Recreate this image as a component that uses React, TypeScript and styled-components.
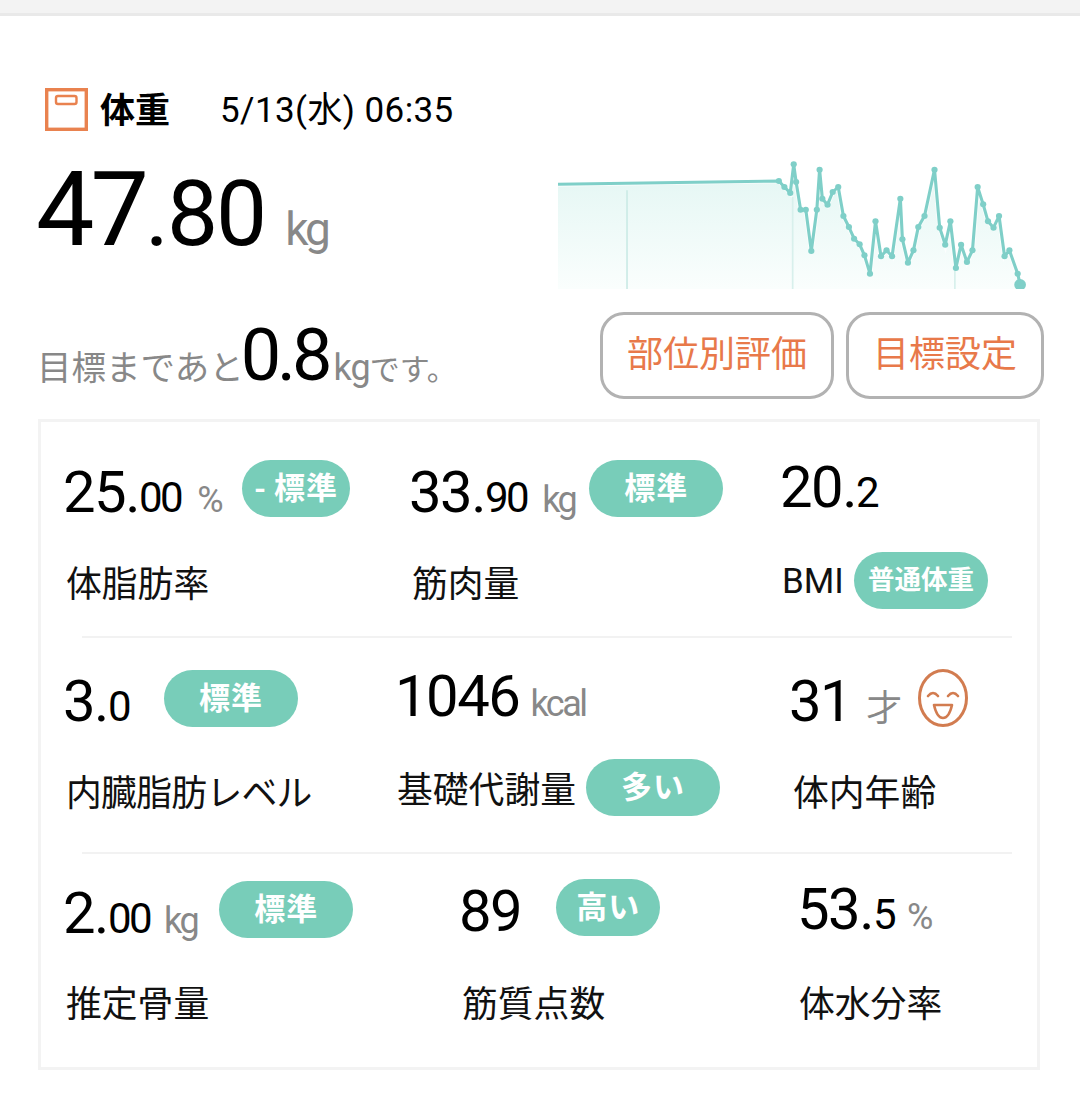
import React from 'react'
import styled, { createGlobalStyle } from 'styled-components'

const GlobalStyle = createGlobalStyle`
  html, body {
    margin: 0;
    padding: 0;
    background: #fff;
  }
  body {
    font-family: Roboto, "Noto Sans CJK JP", sans-serif;
  }
`

const Page = styled.div`
  width: 1080px;
  height: 1108px;
  overflow: hidden;
  background: #fff;
  color: #000;
`

const TopBar = styled.div`
  height: 13px;
  background: #f3f3f3;
  border-bottom: 3px solid #e9e9e9;
`

const Summary = styled.div`
  display: grid;
  grid-template-columns: 520px 1fr;
  height: 403px;
  box-sizing: border-box;
  padding-left: 38px;
`

const SummaryLeft = styled.div`
  display: flex;
  flex-direction: column;
`

const TitleRow = styled.div`
  display: flex;
  align-items: center;
  height: 44px;
  margin: 71px 0 0 7px;
`

const Title = styled.span`
  margin-left: 12px;
  padding-bottom: 4px;
  font-size: 35px;
  font-weight: 700;
  font-family: "Noto Sans CJK JP", sans-serif;
  line-height: 1;
`

const DateText = styled.span`
  margin-left: 50px;
  padding-top: 2px;
  font-size: 35px;
  letter-spacing: 0.4px;
  line-height: 1;
`

const Weight = styled.div`
  display: flex;
  align-items: baseline;
  height: 100px;
  margin: 29px 0 0 -2px;
  line-height: 100px;
`

const WeightInt = styled.span`
  font-size: 104px;
  letter-spacing: -4px;
`

const WeightFrac = styled.span`
  font-size: 91px;
  letter-spacing: -2px;
`

const WeightUnit = styled.span`
  margin-left: 20px;
  font-size: 46px;
  color: #888;
  letter-spacing: -3px;
`

const Goal = styled.div`
  display: flex;
  align-items: baseline;
  margin: 56px 0 0 -1px;
  height: 80px;
  line-height: 80px;
  font-size: 34.5px;
  color: #888;
  font-family: "Noto Sans CJK JP", Roboto, sans-serif;
`

const GoalValue = styled.span`
  margin-left: -3px;
  font-family: Roboto, sans-serif;
  font-size: 72px;
  color: #000;
  letter-spacing: -4px;
`

const GoalUnit = styled.span`
  margin-left: 5px;
  font-family: Roboto, sans-serif;
  font-size: 36px;
  letter-spacing: -1px;
`

const GoalTail = styled.span`
  font-size: 30px;
`

const SummaryRight = styled.div`
  display: flex;
  flex-direction: column;
`

const Chart = styled.svg`
  display: block;
  width: 469px;
  height: 132px;
  margin: 141px 0 0 0;
`

const Buttons = styled.div`
  display: flex;
  gap: 12px;
  margin: 23px 0 0 42px;
`

const OutlineButton = styled.button<{ $width: number }>`
  width: ${(p) => p.$width}px;
  height: 87px;
  box-sizing: border-box;
  padding: 0 0 10px;
  background: #fff;
  border: 3px solid #b2b2b2;
  border-radius: 24px;
  color: #e8794a;
  font-family: "Noto Sans CJK JP", sans-serif;
  font-size: 36px;
  line-height: 1;
`

const Panel = styled.div`
  width: 1002px;
  height: 651px;
  box-sizing: border-box;
  margin-left: 38px;
  border: 3px solid #f3f3f3;
`

const MetricRow = styled.div<{ $divider?: boolean }>`
  position: relative;
  display: grid;
  grid-template-columns: 340px 360px 1fr;
  height: 216px;
  ${(p) =>
    p.$divider
      ? `
    &::after {
      content: '';
      position: absolute;
      left: 41px;
      right: 25px;
      bottom: 0;
      height: 2px;
      background: #f2f2f2;
    }
  `
      : ''}
`

const Cell = styled.div`
  display: flex;
  flex-direction: column;
`

const ValueLine = styled.div<{ $left: number; $top: number }>`
  display: flex;
  align-items: flex-start;
  height: 115px;
  box-sizing: border-box;
  padding: ${(p) => p.$top}px 0 0 ${(p) => p.$left}px;
`

const Value = styled.div`
  display: flex;
  align-items: baseline;
  height: 64px;
  line-height: 64px;
  white-space: nowrap;
`

const ValueInt = styled.span`
  font-size: 58px;
  letter-spacing: -1.5px;
`

const ValueFrac = styled.span`
  font-size: 42px;
  letter-spacing: -2.5px;
`

const Unit = styled.span<{ $gap: number }>`
  margin-left: ${(p) => p.$gap}px;
  font-size: 36px;
  color: #888;
  letter-spacing: -2.5px;
  font-family: Roboto, "Noto Sans CJK JP", sans-serif;
`

const Pill = styled.span<{ $width: number; $left: number; $shift?: number; $small?: boolean }>`
  display: flex;
  align-items: flex-start;
  justify-content: center;
  flex: none;
  width: ${(p) => p.$width}px;
  height: 57px;
  margin-left: ${(p) => p.$left}px;
  margin-top: ${(p) => p.$shift ?? 0}px;
  border-radius: 29px;
  background: #78cdb9;
  color: #fff;
  font-family: "Noto Sans CJK JP", sans-serif;
  font-size: ${(p) => (p.$small ? 26.5 : 31)}px;
  font-weight: 700;
  line-height: 51px;
  letter-spacing: ${(p) => (p.$small ? 0 : 1)}px;
  white-space: nowrap;
`

const LabelLine = styled.div<{ $left: number; $top: number }>`
  display: flex;
  align-items: center;
  height: 60px;
  margin-top: ${(p) => p.$top}px;
  padding-left: ${(p) => p.$left}px;
`

const Label = styled.span<{ $latin?: boolean; $tight?: boolean }>`
  font-family: ${(p) => (p.$latin ? 'Roboto, ' : '')}"Noto Sans CJK JP", sans-serif;
  font-size: ${(p) => (p.$latin ? 35 : 35.8)}px;
  line-height: 60px;
  color: #111;
  white-space: nowrap;
  ${(p) => (p.$latin ? 'padding-top: 4px;' : '')}
  ${(p) => (p.$tight ? 'letter-spacing: -0.7px;' : '')}
`

const FaceIcon = styled.svg`
  flex: none;
  width: 50px;
  height: 58px;
  margin: 0 0 0 18px;
`

const ScaleSvg = styled.svg`
  flex: none;
  width: 43px;
  height: 43px;
`

const ScaleIcon = () => (
  <ScaleSvg viewBox="0 0 43 43">
    <rect x="1.7" y="1.7" width="39.6" height="39.6" fill="#fff" stroke="#e9824f" strokeWidth="3.4" />
    <rect x="11" y="8" width="20.5" height="8" rx="2" fill="none" stroke="#e9824f" strokeWidth="2.4" />
  </ScaleSvg>
)

const Face = () => (
  <FaceIcon viewBox="0 0 50 58">
    <ellipse cx="25" cy="29" rx="23.5" ry="27.5" fill="none" stroke="#d27c50" strokeWidth="3" />
    <path d="M10 27 q5 -6 10 0 M30 27 q5 -6 10 0" fill="none" stroke="#d27c50" strokeWidth="2.6" strokeLinecap="round" />
    <path d="M16 36 H34 Q31 49 25 49 Q19 49 16 36 Z" fill="none" stroke="#d27c50" strokeWidth="2.6" strokeLinejoin="round" />
  </FaceIcon>
)

// traced from the curve, in crop units
const points: [number, number][] = [
  [52, 132], [692, 122], [708, 140], [725, 158], [735, 72], [742, 125], [755, 208], [770, 208],
  [786, 332], [802, 208], [810, 88], [818, 175], [833, 193], [848, 155], [864, 140], [879, 227],
  [895, 260], [910, 295], [926, 312], [940, 345], [956, 400], [972, 243], [988, 348], [1004, 330],
  [1020, 348], [1044, 175], [1050, 297], [1066, 367], [1082, 330], [1096, 260], [1114, 227],
  [1143, 88], [1158, 262], [1174, 313], [1189, 243], [1205, 383], [1220, 313], [1237, 365],
  [1253, 330], [1268, 140], [1284, 192], [1298, 243], [1314, 262], [1330, 227], [1346, 348],
  [1360, 330], [1384, 400], [1391, 433],
]

const linePath = points.map(([x, y]) => `${x},${y}`).join(' ')

const WeightChart = () => (
  <Chart viewBox="52 50 1359 396" preserveAspectRatio="none">
    <defs>
      <linearGradient id="area" x1="0" y1="0" x2="0" y2="1">
        <stop offset="0" stopColor="#e3f6f3" />
        <stop offset="1" stopColor="#fafefd" />
      </linearGradient>
    </defs>
    <polygon points={`${linePath} 1391,446 52,446`} fill="url(#area)" />
    <polyline points={linePath} fill="none" stroke="#fff" strokeWidth="14" opacity="0.7" />
    <path d="M252 150 V446" stroke="#cdebe6" strokeWidth="5" />
    <path d="M732 170 V446" stroke="#d8f0ec" strokeWidth="5" />
    <path d="M1202 390 V446" stroke="#d8f0ec" strokeWidth="5" />
    <polyline points={linePath} fill="none" stroke="#7fcfc8" strokeWidth="9" strokeLinejoin="round" />
    {points.slice(1, -1).map(([x, y]) => (
      <circle key={`${x}-${y}`} cx={x} cy={y} r="9" fill="#7fcfc8" />
    ))}
    <circle cx="1391" cy="433" r="17" fill="#7fcfc8" />
  </Chart>
)

interface IMetric {
  int: string
  frac?: string
  unit?: string
  unitGap?: number
  left: number
  top: number
  pill?: string
  pillWidth?: number
  pillLeft?: number
  pillShift?: number
  face?: boolean
  label: string
  labelLeft: number
  labelTop: number
  labelLatin?: boolean
  labelTight?: boolean
  labelPill?: string
  labelPillWidth?: number
  labelPillLeft?: number
  labelPillSmall?: boolean
}

const rows: IMetric[][] = [
  [
    { int: '25.', frac: '00', unit: '%', unitGap: 16, left: 22, top: 38, pill: '-\u2009標準', pillWidth: 108, pillLeft: 21, pillShift: 0, label: '体脂肪率', labelLeft: 25, labelTop: 14 },
    { int: '33.', frac: '90', unit: 'kg', unitGap: 15, left: 28, top: 38, pill: '標準', pillWidth: 134, pillLeft: 14, pillShift: 0, label: '筋肉量', labelLeft: 31, labelTop: 14 },
    { int: '20.', frac: '2', left: 39, top: 33, label: 'BMI', labelLeft: 41, labelTop: 13, labelLatin: true, labelPill: '普通体重', labelPillWidth: 134, labelPillLeft: 10, labelPillSmall: true },
  ],
  [
    { int: '3.', frac: '0', left: 22, top: 31, pill: '標準', pillWidth: 134, pillLeft: 35, pillShift: 1, label: '内臓脂肪レベル', labelLeft: 25, labelTop: 7, labelTight: true },
    { int: '1046', unit: 'kcal', unitGap: 11, left: 14, top: 26, label: '基礎代謝量', labelLeft: 16, labelTop: 4, labelPill: '多い', labelPillWidth: 134, labelPillLeft: 10 },
    { int: '31', unit: '才', unitGap: 15, left: 48, top: 31, face: true, label: '体内年齢', labelLeft: 52, labelTop: 7 },
  ],
  [
    { int: '2.', frac: '00', unit: 'kg', unitGap: 14, left: 22, top: 27, pill: '標準', pillWidth: 134, pillLeft: 22, pillShift: 0, label: '推定骨量', labelLeft: 25, labelTop: 2 },
    { int: '89', left: 78, top: 25, pill: '高い', pillWidth: 104, pillLeft: 35, pillShift: 0, label: '筋質点数', labelLeft: 81, labelTop: 2 },
    { int: '53.', frac: '5', unit: '%', unitGap: 13, left: 56, top: 23, label: '体水分率', labelLeft: 58, labelTop: 2 },
  ],
]

const Metric = ({ m }: { m: IMetric }): JSX.Element => (
  <Cell>
    <ValueLine $left={m.left} $top={m.top}>
      <Value>
        <ValueInt>{m.int}</ValueInt>
        {m.frac && <ValueFrac>{m.frac}</ValueFrac>}
        {m.unit && <Unit $gap={m.unitGap ?? 0}>{m.unit}</Unit>}
      </Value>
      {m.pill && (
        <Pill $width={m.pillWidth ?? 134} $left={m.pillLeft ?? 0} $shift={m.pillShift}>
          {m.pill}
        </Pill>
      )}
      {m.face && <Face />}
    </ValueLine>
    <LabelLine $left={m.labelLeft} $top={m.labelTop}>
      <Label $latin={m.labelLatin} $tight={m.labelTight}>{m.label}</Label>
      {m.labelPill && (
        <Pill $width={m.labelPillWidth ?? 134} $left={m.labelPillLeft ?? 0} $small={m.labelPillSmall}>
          {m.labelPill}
        </Pill>
      )}
    </LabelLine>
  </Cell>
)

const App = (): JSX.Element => {
  return (
    <Page>
      <GlobalStyle />
      <TopBar />
      <Summary>
        <SummaryLeft>
          <TitleRow>
            <ScaleIcon />
            <Title>体重</Title>
            <DateText>5/13(水) 06:35</DateText>
          </TitleRow>
          <Weight>
            <WeightInt>47</WeightInt>
            <WeightFrac>.80</WeightFrac>
            <WeightUnit>kg</WeightUnit>
          </Weight>
          <Goal>
            目標まであと
            <GoalValue>0.8</GoalValue>
            <GoalUnit>kg</GoalUnit>
            <GoalTail>です。</GoalTail>
          </Goal>
        </SummaryLeft>
        <SummaryRight>
          <WeightChart />
          <Buttons>
            <OutlineButton $width={234}>部位別評価</OutlineButton>
            <OutlineButton $width={198}>目標設定</OutlineButton>
          </Buttons>
        </SummaryRight>
      </Summary>
      <Panel>
        {rows.map((row, i) => (
          <MetricRow key={i} $divider={i < rows.length - 1}>
            {row.map((m) => (
              <Metric key={m.label} m={m} />
            ))}
          </MetricRow>
        ))}
      </Panel>
    </Page>
  )
}

export default App
